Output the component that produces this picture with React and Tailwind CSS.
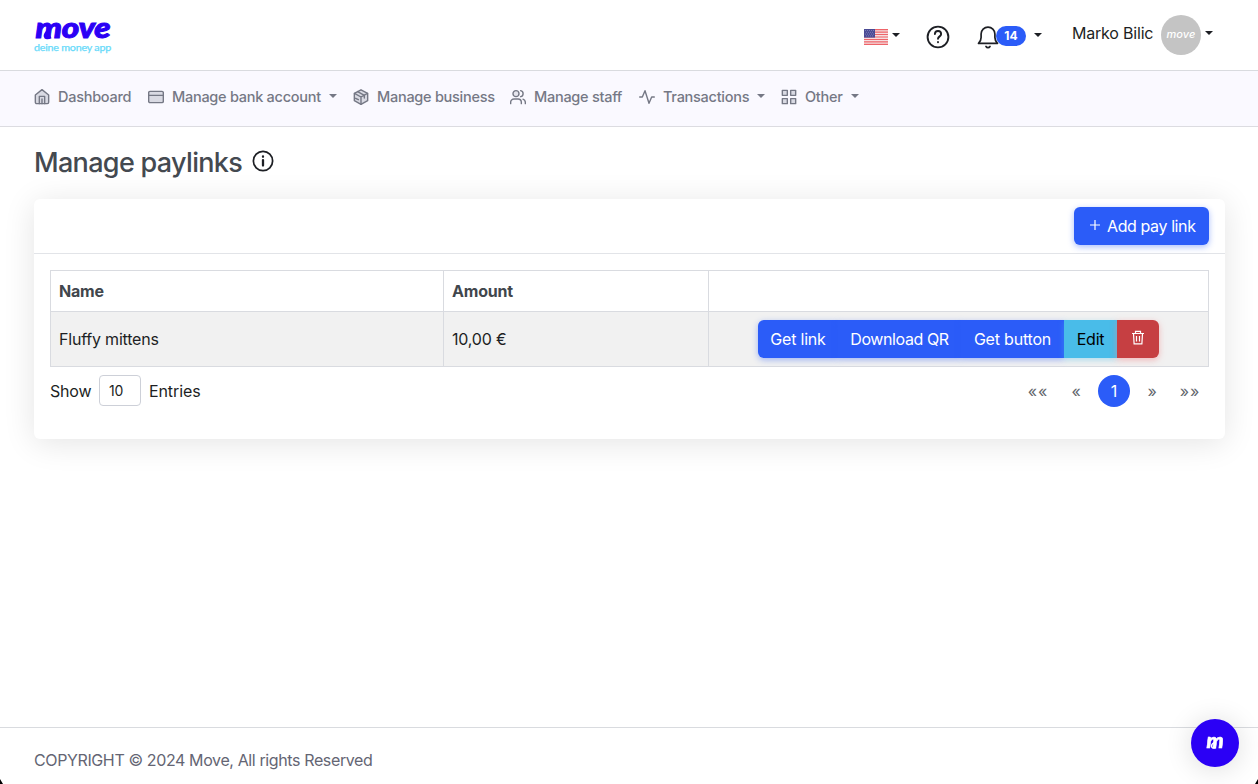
const Caret = ({ className = '' }) => (
  <svg viewBox="0 0 8 4" className={`h-1 w-2 shrink-0 ${className}`} fill="currentColor">
    <path d="M0 0h8L4 4z" />
  </svg>
);

const Icon = ({ children, className = 'size-4', width = 2.1 }) => (
  <svg viewBox="0 0 24 24" className={`shrink-0 ${className}`} fill="none" stroke="currentColor" strokeWidth={width} strokeLinecap="round" strokeLinejoin="round">
    {children}
  </svg>
);

const Logo = () => (
  <svg viewBox="0 0 80 36" className="h-9 w-20 shrink-0 overflow-visible">
    <text x="1.500" y="19.500" textLength="75" lengthAdjust="spacingAndGlyphs" fill="#2b00f5" stroke="#2b00f5" strokeWidth="1" fontSize="29" fontWeight="900" fontStyle="italic" fontFamily="Lato, sans-serif">move</text>
    <path d="M17 19c-7 3-8-2-2-7" fill="none" stroke="#2b00f5" strokeWidth="2.800" />
    <text x="0" y="33" textLength="77" lengthAdjust="spacingAndGlyphs" fill="#67dafa" stroke="#67dafa" strokeWidth=".25" fontSize="9.500" fontFamily="Lato, sans-serif">deine money app</text>
  </svg>
);

const Flag = () => (
  <svg viewBox="0 0 24 16" className="h-4 w-6 shrink-0">
    <path fill="#f5dfe1" d="M0 0h24v16H0z" />
    <path stroke="#ee6469" strokeWidth="1.230" d="M0 .6h24M0 3.100h24M0 5.500h24M0 8h24M0 10.500h24M0 12.900h24M0 15.400h24" />
    <path fill="#4b4b95" d="M0 0h11v8.600H0z" />
    <path stroke="#8f90c4" strokeWidth=".7" strokeDasharray="1 1" d="M1 1.500h9M2 3.300h8M1 5.100h9M2 6.900h8" />
  </svg>
);

const icons = {
  home: (
    <>
      <path fill="#d9dae3" d="M2 9l10-8 10 8v11a2 2 0 0 1-2 2H4a2 2 0 0 1-2-2z" />
      <path d="M8 22V11h8v11M12 15v7" />
    </>
  ),
  card: (
    <>
      <rect fill="#d9dae3" x="1" y="3.500" width="22" height="17" rx="2" />
      <path d="M1 9.500h22" />
    </>
  ),
  box: (
    <>
      <path fill="#d9dae3" d="M12 1.200l10 5.300v11L12 23 2 17.500v-11z" />
      <path d="M2.300 6.700L12 12l9.700-5.300M12 12v11M7 3.900l10 5.500v4M4 14l4 2" />
    </>
  ),
  users: (
    <>
      <circle cx="9" cy="7" r="4.500" fill="#e5e5ed" />
      <path d="M1 22v-2a5 5 0 0 1 5-5h6a5 5 0 0 1 5 5v2M16 2.500a4.600 4.600 0 0 1 0 9M19.500 15.200c2.300.7 3.500 2.500 3.500 4.800v2" />
    </>
  ),
  activity: <path d="M1 12h4L9 2.500l6 19L19 12h4" />,
  grid: (
    <>
      <rect fill="#d9dae3" x="2" y="2" width="7.500" height="7.500" />
      <rect fill="#d9dae3" x="14.500" y="2" width="7.500" height="7.500" />
      <rect fill="#d9dae3" x="2" y="14.500" width="7.500" height="7.500" />
      <rect fill="#d9dae3" x="14.500" y="14.500" width="7.500" height="7.500" />
    </>
  ),
};

const nav = [
  { icon: 'home', label: 'Dashboard', width: 'w-[114px]' },
  { icon: 'card', label: 'Manage bank account', width: 'w-[205px]', menu: true },
  { icon: 'box', label: 'Manage business', width: 'w-[157px]' },
  { icon: 'users', label: 'Manage staff', width: 'w-[129px]' },
  { icon: 'activity', label: 'Transactions', width: 'w-[142px]', menu: true },
  { icon: 'grid', label: 'Other', width: 'w-[90px]', menu: true },
];

const blue = 'bg-[#2b5cf8] text-white shadow-[0_2px_6px_#2b5cf866]';

export default function App() {
  return (
    <div className="flex h-[784px] w-[1258px] flex-col overflow-hidden bg-white font-['Inter','Liberation_Sans',sans-serif] text-base tracking-[-0.2px] text-[#1d1f24]">
      <header className="flex h-[71px] shrink-0 items-start border-b border-[#d9dbdf] pl-[34px]">
        <div className="w-[830px] pt-[18px]"><Logo /></div>
        <button className="flex w-[62px] items-center gap-1 pt-[29px]"><Flag /><Caret className="-mt-1" /></button>
        <button className="w-[50px] pt-[25px]">
          <Icon className="size-6" width={1.9}>
            <circle cx="12" cy="12" r="10.400" />
            <path d="M8.900 9a3.100 3.100 0 0 1 6.200.3c0 2-3.100 2.200-3.100 4.500M12 17v.3" />
          </Icon>
        </button>
        <button className="flex w-[96px] items-start pt-[25px]">
          <Icon className="size-6" width={1.7}>
            <path d="M2.500 18.300h19c-1.700-1.600-2.600-3-2.600-5.800V9a6.900 6.900 0 0 0-13.800 0v3.500c0 2.800-.9 4.200-2.600 5.800zM10 21.500c1 1.500 3 1.500 4 0" />
          </Icon>
          <span className="mt-px -ml-1 flex h-5 w-[30px] items-center justify-center rounded-full bg-[#2b5cf8] text-xs font-bold tracking-normal text-white">14</span>
          <Caret className="mt-2 ml-2" />
        </button>
        <button className="flex items-start pt-[15px]">
          <span className="w-[89px] whitespace-nowrap pt-1.5 text-left leading-6">Marko Bilic</span>
          <span className="flex size-10 items-center justify-center rounded-full bg-[#c4c4c4] pb-0.5 text-[11px] font-medium italic tracking-[0.1px] text-white">move</span>
          <Caret className="mt-4 ml-1" />
        </button>
      </header>

      <nav className="flex h-14 shrink-0 items-start border-b border-[#dcdce1] bg-[#faf9ff] pt-[15px] pl-[34px] text-[14.500px] font-medium tracking-[-0.270px] text-[#757885]">
        {nav.map((item) => (
          <a key={item.label} className={`flex h-[22px] items-center gap-2 whitespace-nowrap ${item.width}`}>
            <Icon>{icons[item.icon]}</Icon>
            <span className="pb-px">{item.label}</span>
            {item.menu && <Caret className="-mt-0.5" />}
          </a>
        ))}
      </nav>

      <main className="flex-1 pr-[33px] pl-[34px]">
        <div className="flex h-[72px] items-center gap-2.5">
          <h1 className="w-[208px] whitespace-nowrap text-[27px] leading-9 font-medium tracking-[-0.680px] text-[#444950]">Manage paylinks</h1>
          <Icon className="-mt-1 size-[22px]" width={1.9}>
            <circle cx="12" cy="12" r="10.500" />
            <path d="M12 11v6M12 7v.4" strokeWidth="2.500" />
          </Icon>
        </div>

        <section className="h-60 rounded-md bg-white shadow-[0_4px_32px_rgba(0,0,0,0.11)]">
          <div className="flex h-[55px] items-start justify-end border-b border-[#e2e4e8] pt-2 pr-4">
            <button className={`flex h-[38px] w-[135px] items-center rounded-md pl-[15px] tracking-[-0.4px] whitespace-nowrap ${blue}`}>
              <svg viewBox="0 0 12 12" className="-mt-0.5 mr-1.5 size-3" stroke="currentColor" strokeWidth="1.200"><path d="M1 6h10M6 1v10" /></svg>
              Add pay link
            </button>
          </div>
          <div className="px-4 pt-4">
            <table className="h-[97px] w-full table-fixed border-collapse text-left">
              <colgroup><col className="w-[393px]" /><col className="w-[265px]" /><col /></colgroup>
              <thead>
                <tr className="h-[41px] font-semibold text-[#41464c]">
                  <th className="border border-[#d9dbe0] px-2">Name</th>
                  <th className="border border-[#d9dbe0] px-2">Amount</th>
                  <th className="border border-[#d9dbe0]" />
                </tr>
              </thead>
              <tbody>
                <tr className="h-[55px] bg-[#f1f1f1]">
                  <td className="border border-[#d9dbe0] px-2">Fluffy mittens</td>
                  <td className="border border-[#d9dbe0] px-2">10,00 €</td>
                  <td className="border border-[#d9dbe0]">
                    <div className="mx-auto flex h-[38px] w-[401px] overflow-visible whitespace-nowrap">
                      <button className={`w-20 rounded-l-md ${blue}`}>Get link</button>
                      <button className={`w-[123px] tracking-[-0.4px] ${blue}`}>Download QR</button>
                      <button className={`w-[103px] ${blue}`}>Get button</button>
                      <button className="w-[53px] bg-[#49bce9] text-black shadow-[0_2px_6px_#49bce966]">Edit</button>
                      <button className="flex w-[42px] items-center justify-center rounded-r-md bg-[#c63f42] text-white shadow-[0_2px_6px_#f1858888]">
                        <svg viewBox="0 0 14 16" className="-mt-0.5 h-4 w-3.5" fill="none" stroke="currentColor" strokeWidth="1.200">
                          <path d="M1 3.500h12M4.500 3.500V1.300h5v2.200M2.500 3.500l.6 10.300h7.800l.6-10.300M5.500 6v5.500M8.500 6v5.500" />
                        </svg>
                      </button>
                    </div>
                  </td>
                </tr>
              </tbody>
            </table>
            <div className="flex items-start justify-between pt-2">
              <div className="flex h-8 items-start leading-8">
                <span className="w-[49px]">Show</span>
                <span className="flex h-[31px] w-[42px] items-center rounded border border-[#cdd0d8] pl-[9px] text-sm tracking-[-0.1px]">10</span>
                <span className="ml-2 tracking-[-0.1px]">Entries</span>
              </div>
              <div className="mr-[3px] flex h-8 items-center text-center text-[#62666c]">
                <span className="w-8 tracking-[1px]">««</span>
                <span className="ml-1.5 w-8">«</span>
                <span className="ml-1.5 flex size-8 items-center justify-center rounded-full bg-[#2b5cf8] text-white">1</span>
                <span className="ml-1.5 w-8">»</span>
                <span className="ml-1.5 w-8 tracking-[1px]">»»</span>
              </div>
            </div>
          </div>
        </section>
      </main>

      <footer className="flex h-[57px] shrink-0 items-center border-t border-[#d9dbdf] pt-2 pl-[34px] tracking-[-0.380px] text-[#646573]">
        COPYRIGHT © 2024 Move, All rights Reserved
      </footer>

      <button className="fixed right-[19px] bottom-[17px] flex size-12 items-center justify-center rounded-full bg-[#2b00f5] shadow-[0_2px_28px_rgba(0,0,0,0.14)]">
        <svg viewBox="0 0 20 16" className="h-4 w-5 overflow-visible">
          <text x="1.500" y="13" textLength="17" lengthAdjust="spacingAndGlyphs" fill="white" stroke="white" strokeWidth=".5" fontSize="20" fontWeight="900" fontStyle="italic" fontFamily="Lato, sans-serif">m</text>
          <path d="M11 12.500c-5 2-6-2-2-5" fill="none" stroke="white" strokeWidth="1.500" />
        </svg>
      </button>
      <svg viewBox="0 0 3 5" className="fixed right-0 bottom-0 h-[5px] w-[3px]"><path d="M3 0v5H0z" /></svg>
      <svg viewBox="0 0 3 5" className="fixed bottom-0 left-0 h-[5px] w-[3px]"><path d="M0 0v5h3z" /></svg>
    </div>
  );
}
